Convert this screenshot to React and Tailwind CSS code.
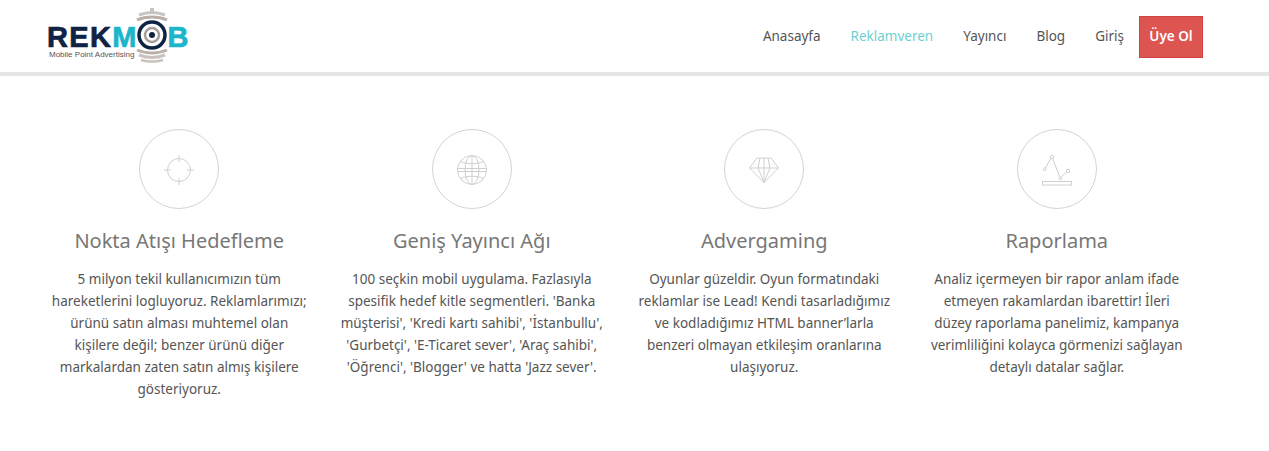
import React from "react";

function TargetIcon() {
  return (
    <svg width="30" height="30" viewBox="0 0 30 30" fill="none" stroke="#cfcfcf" strokeWidth="1">
      <circle cx="15" cy="15" r="11.5" />
      <path d="M15 0v7M15 23v7M0 15h7M23 15h7" />
    </svg>
  );
}

function GlobeIcon() {
  return (
    <svg width="30" height="30" viewBox="0 0 30 30" fill="none" stroke="#cfcfcf" strokeWidth="1">
      <circle cx="15" cy="15" r="14.5" />
      <ellipse cx="15" cy="15" rx="7" ry="14.5" />
      <path d="M15 .5v29M.5 13.5h29M.5 16.5h29M3.5 6.5c7 3 16 3 23 0M3.5 23.5c7-3 16-3 23 0" />
    </svg>
  );
}

function DiamondIcon() {
  return (
    <svg width="30" height="26" viewBox="0 0 30 26" fill="none" stroke="#cfcfcf" strokeWidth="1">
      <path d="M8 1h14l7.5 10L15 25.5.5 11z" />
      <path d="M.5 11h29M11 1 9 11l6 14.5L21 11 19 1M15 1v24.5" />
    </svg>
  );
}

function ChartIcon() {
  return (
    <svg width="30" height="31" viewBox="0 0 30 31" fill="none" stroke="#cfcfcf" strokeWidth="1">
      <path d="M3.4 13 9 3M10.6 3.5 17.6 21.5M19.3 22l5.4-5" />
      <circle cx="2.7" cy="14.3" r="1.5" />
      <circle cx="10" cy="1.9" r="1.7" />
      <circle cx="18.3" cy="23.3" r="1.5" />
      <circle cx="26" cy="16" r="1.7" />
      <rect x="0.5" y="26.5" width="29" height="3.5" />
    </svg>
  );
}

function Logo() {
  return (
    <div className="relative w-[142px] h-[58px] font-['Liberation_Sans',sans-serif]">
      <div className="absolute left-0 top-[19px] flex items-center text-[29px] leading-[22px] font-bold tracking-[1.3px] [-webkit-text-stroke:0.7px]">
        <span className="text-[#0f2344]">REK</span>
        <span className="text-[#1cb5c9]">M</span>
        <span className="w-[30px]" />
        <span className="text-[#1cb5c9]">B</span>
      </div>
      <svg className="absolute left-[88px] top-0" width="34" height="58" viewBox="0 0 34 58" fill="none">
        <path d="M15 1h4v4h-4z" fill="#c9c2bd" />
        <path d="M4 8c8-3 18-3 26 0" stroke="#c9c2bd" strokeWidth="3" />
        <path d="M2 13c9-4 21-4 30 0" stroke="#b9b0aa" strokeWidth="3" />
        <path d="M2 43c9 4 21 4 30 0" stroke="#b9b0aa" strokeWidth="3" />
        <path d="M4 48c8 3 18 3 26 0" stroke="#c9c2bd" strokeWidth="3" />
        <path d="M6 53c7 2 15 2 22 0" stroke="#c9c2bd" strokeWidth="2.5" />
        <circle cx="17" cy="28" r="13" fill="#fff" stroke="#0f2344" strokeWidth="3.5" />
        <circle cx="17" cy="28" r="7" stroke="#a79f9a" strokeWidth="2.5" />
        <circle cx="17" cy="28" r="3" fill="#0f2344" />
      </svg>
      <div className="absolute left-[2px] top-[43px] text-[8px] leading-[9px] text-[#55565a] whitespace-nowrap">
        Mobile Point Advertising
      </div>
    </div>
  );
}

const navItems = [
  { label: "Anasayfa", cls: "text-[#555]" },
  { label: "Reklamveren", cls: "text-[#6fcfcf]" },
  { label: "Yayıncı", cls: "text-[#555]" },
  { label: "Blog", cls: "text-[#555]" },
  { label: "Giriş", cls: "text-[#555]" },
];

const features = [
  {
    title: "Nokta Atışı Hedefleme",
    icon: <TargetIcon />,
    lines: [
      "5 milyon tekil kullanıcımızın tüm",
      "hareketlerini logluyoruz. Reklamlarımızı;",
      "ürünü satın alması muhtemel olan",
      "kişilere değil; benzer ürünü diğer",
      "markalardan zaten satın almış kişilere",
      "gösteriyoruz.",
    ],
  },
  {
    title: "Geniş Yayıncı Ağı",
    icon: <GlobeIcon />,
    lines: [
      "100 seçkin mobil uygulama. Fazlasıyla",
      "spesifik hedef kitle segmentleri. 'Banka",
      "müşterisi', 'Kredi kartı sahibi', 'İstanbullu',",
      "'Gurbetçi', 'E-Ticaret sever', 'Araç sahibi',",
      "'Öğrenci', 'Blogger' ve hatta 'Jazz sever'.",
    ],
  },
  {
    title: "Advergaming",
    icon: <DiamondIcon />,
    lines: [
      "Oyunlar güzeldir. Oyun formatındaki",
      "reklamlar ise Lead! Kendi tasarladığımız",
      "ve kodladığımız HTML banner’larla",
      "benzeri olmayan etkileşim oranlarına",
      "ulaşıyoruz.",
    ],
  },
  {
    title: "Raporlama",
    icon: <ChartIcon />,
    lines: [
      "Analiz içermeyen bir rapor anlam ifade",
      "etmeyen rakamlardan ibarettir! İleri",
      "düzey raporlama panelimiz, kampanya",
      "verimliliğini kolayca görmenizi sağlayan",
      "detaylı datalar sağlar.",
    ],
  },
];

export default function App() {
  return (
    <div className="w-[1269px] h-[451px] bg-white overflow-hidden font-['Noto_Sans','Open_Sans',sans-serif]">
      <header className="h-[76px] border-b-4 border-[#e5e5e5] flex items-start pl-[47px] pr-[66px] justify-between">
        <div className="pt-[7px]">
          <Logo />
        </div>
        <nav className="flex items-center h-[42px] mt-[16px] text-[13.5px]">
          {navItems.map((item) => (
            <a key={item.label} className={`px-[15px] pb-[1px] ${item.cls}`}>{item.label}</a>
          ))}
          <a className="h-[42px] w-[64px] pb-[1px] flex items-center justify-center bg-[#dc5551] border border-[#d2443f] text-white font-semibold">
            Üye Ol
          </a>
        </nav>
      </header>

      <main className="w-[1170px] ml-[33px] grid grid-cols-4 pt-[53px]">
        {features.map((f) => (
          <section key={f.title} className="flex flex-col items-center text-center">
            <div className="w-[80px] h-[80px] pt-[2px] rounded-full border border-[#d4d4d4] flex items-center justify-center">
              {f.icon}
            </div>
            <h3 className="mt-[18px] text-[20px] leading-[28px] text-[#777]">{f.title}</h3>
            <p className="mt-[13px] text-[13.5px] leading-[22px] text-[#555] whitespace-nowrap">
              {f.lines.map((line) => (
                <span key={line} className="block">{line}</span>
              ))}
            </p>
          </section>
        ))}
      </main>
    </div>
  );
}
